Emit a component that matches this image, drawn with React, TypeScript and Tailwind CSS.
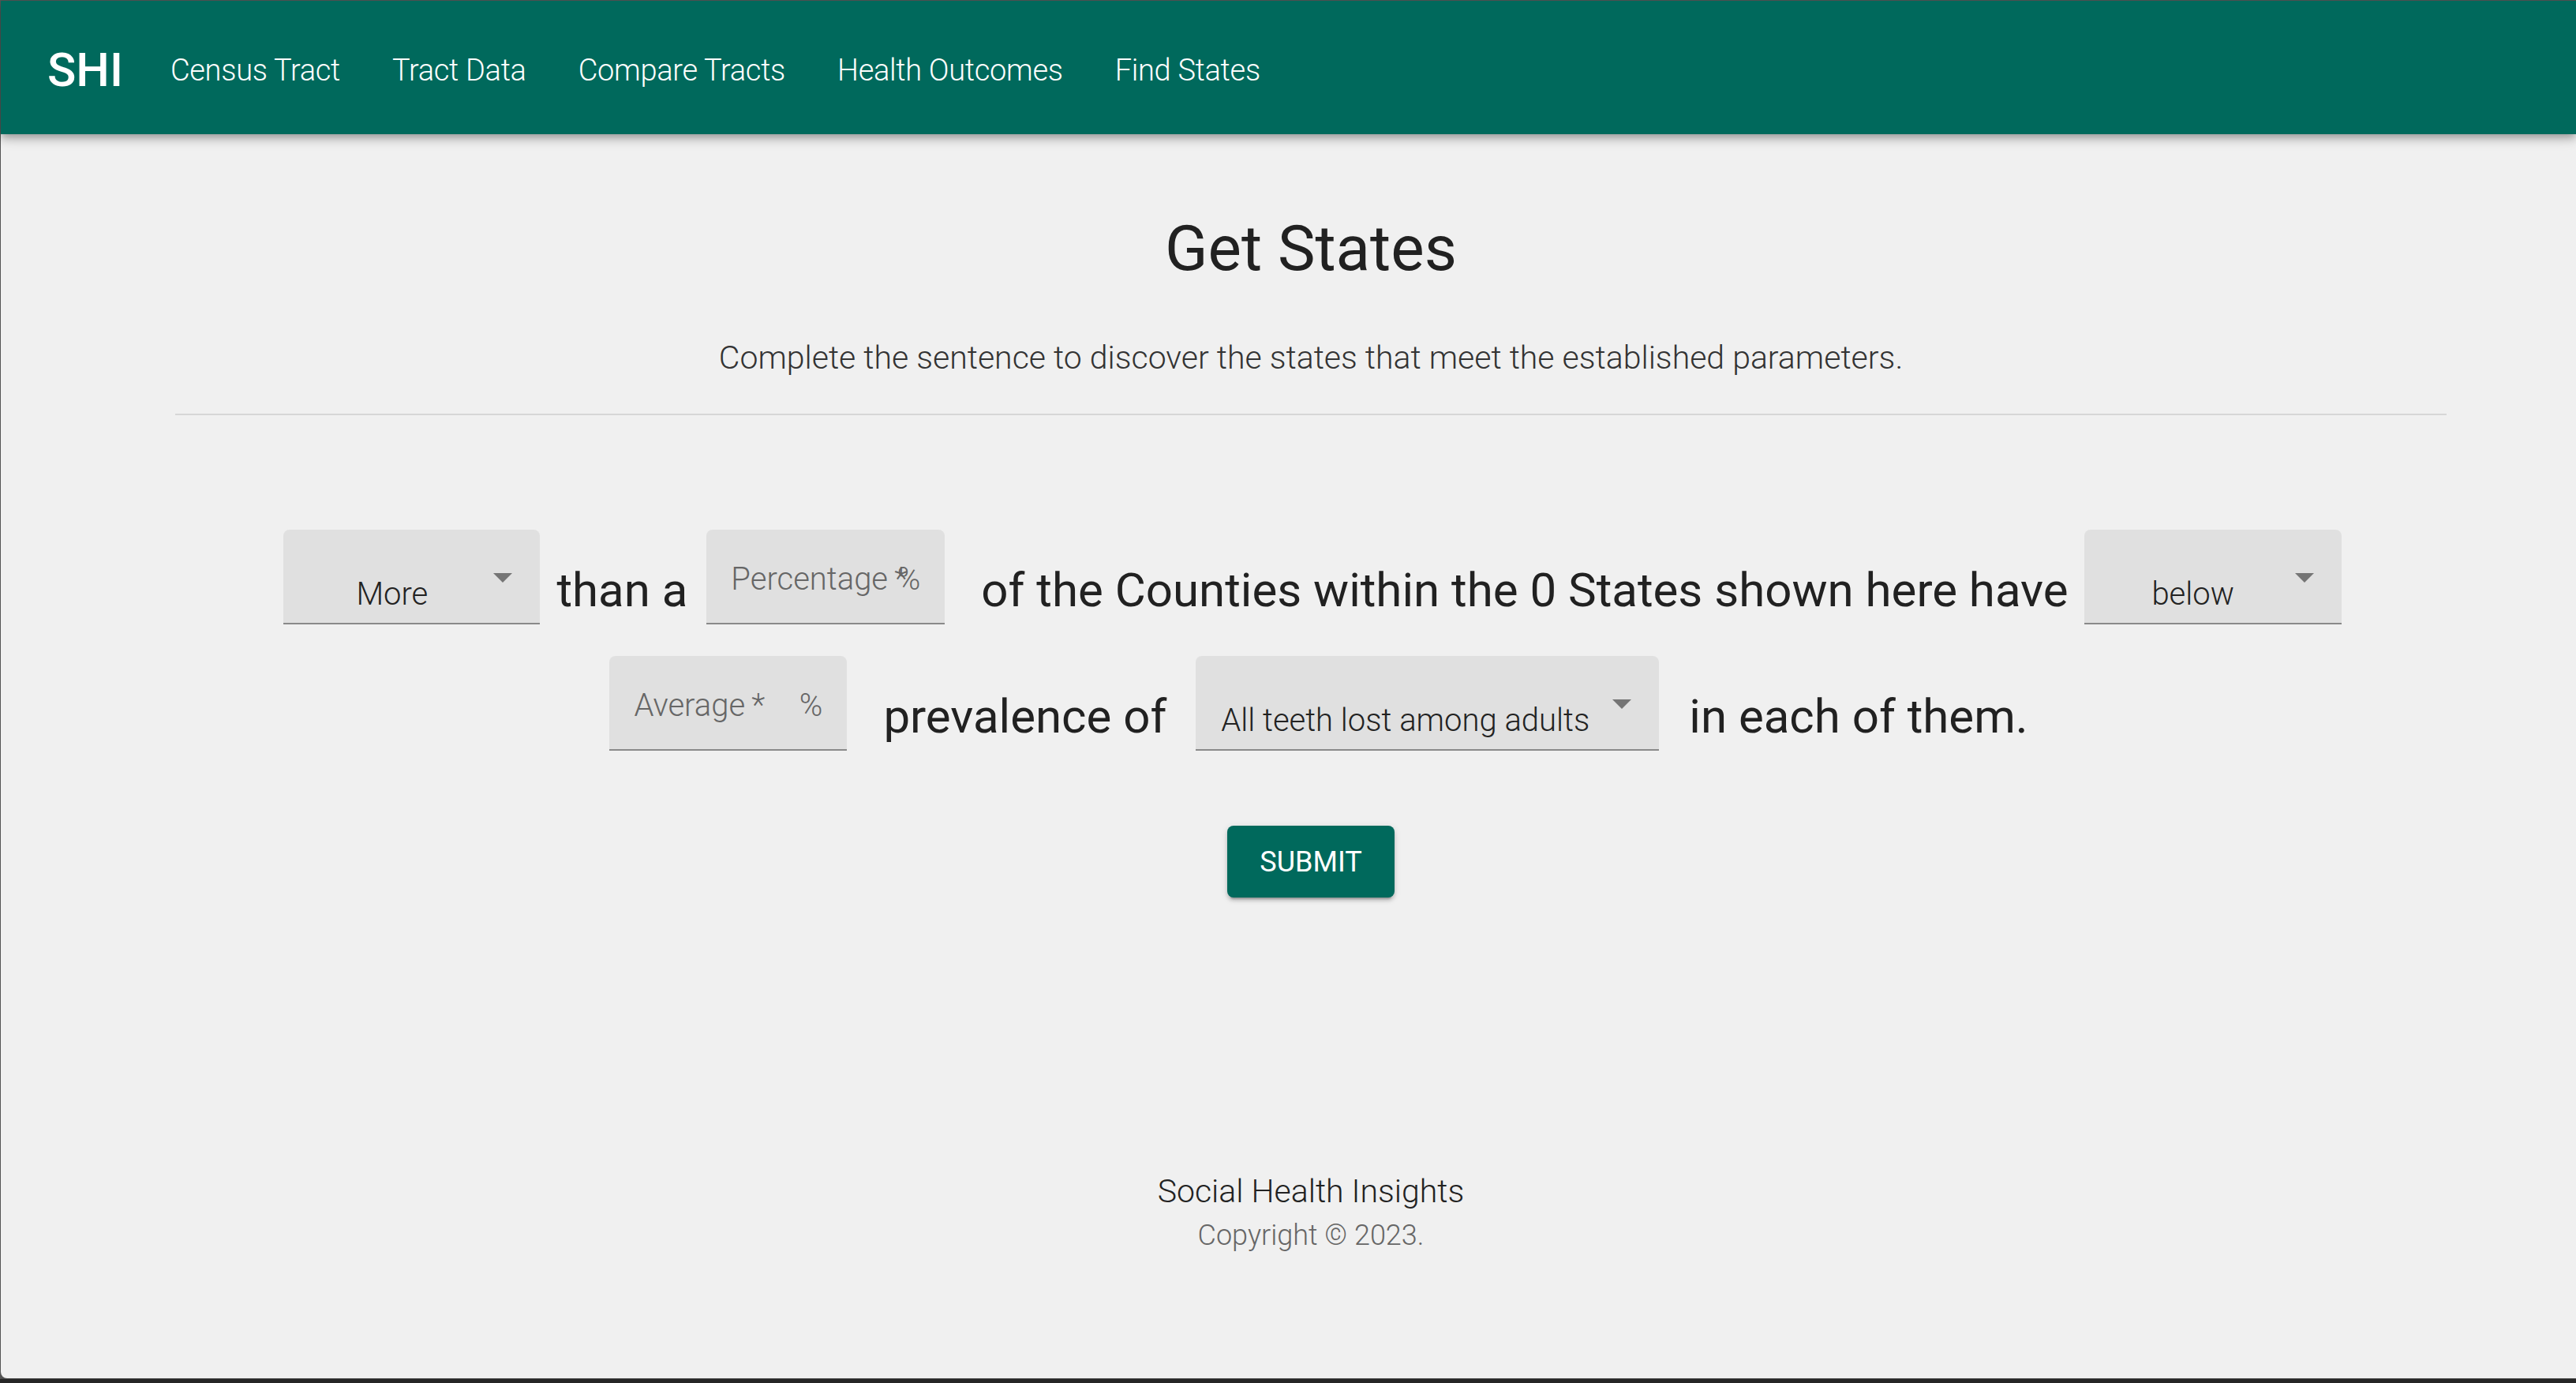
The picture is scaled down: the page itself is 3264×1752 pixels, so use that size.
import React from "react";

const navLinks = ["Census Tract", "Tract Data", "Compare Tracts", "Health Outcomes", "Find States"];

function Arrow() {
  return (
    <svg width="24" height="12" viewBox="0 0 24 12" className="absolute right-[35px] top-[55px]">
      <path d="M0 0H24L12 12Z" fill="#757575" />
    </svg>
  );
}

function CenterSelect({ value, className }: { value: string; className: string }) {
  return (
    <div className={className}>
      <div className="pt-[62px] pl-[24px] pr-[74px] text-center text-[40px] leading-[40px] font-light text-[#222]">
        {value}
      </div>
      <Arrow />
    </div>
  );
}

function PercentField({ label, className }: { label: string; className: string }) {
  return (
    <div className={className}>
      <span className="absolute left-[31px] top-[43px] text-[40px] leading-[40px] font-light text-[#666] whitespace-nowrap">
        {label}
        {"\u2009*"}
      </span>
      <span className="absolute right-[31px] top-[43px] text-[40px] leading-[40px] font-light text-[#666]">%</span>
    </div>
  );
}

function Words({ children, className }: { children: React.ReactNode; className: string }) {
  return <span className={className}>{children}</span>;
}

export default function App() {
  return (
    <div className="h-[1752px] w-full bg-[#262626] font-[Roboto,sans-serif] overflow-hidden">
      <div className="bg-[#555] pt-px pl-px">
        <div className="flex h-[1745px] flex-col rounded-bl-[8px] bg-[#f0f0f0]">
          {/* App bar */}
          <header className="relative z-10 flex h-[169px] shrink-0 items-center bg-[#00695c] pl-[59px] pt-[6px] shadow-[0_4px_8px_-2px_rgba(0,0,0,0.2),0_8px_10px_0_rgba(0,0,0,0.14),0_2px_20px_0_rgba(0,0,0,0.12)]">
            <span className="text-[60px] leading-[60px] font-medium text-white">SHI</span>
            <nav className="ml-[60px] flex gap-[66px]">
              {navLinks.map((l) => (
                <span key={l} className="text-[38px] leading-[38px] tracking-[-0.3px] font-light text-white whitespace-nowrap">
                  {l}
                </span>
              ))}
            </nav>
          </header>

          <main className="flex flex-1 flex-col items-center pl-[57px]">
            <h1 className="mt-[105px] text-[80px] leading-[80px] font-normal text-[#212121]">Get States</h1>
            <p className="mt-[78px] text-[41px] leading-[41px] font-light text-[#333]">
              Complete the sentence to discover the states that meet the established parameters.
            </p>
            <div className="mt-[50px] h-[2px] w-[2878px] bg-[#d6d6d6]" />

            {/* sentence form */}
            <div className="mt-[145px] flex items-start justify-center pl-[4px]">
              <CenterSelect
                value="More"
                className="relative h-[120px] w-[325px] shrink-0 rounded-t-[8px] border-b-2 border-[#8a8a8a] bg-[#e0e0e0]"
              />
              <Words className="ml-[21px] mr-[24px] mt-[47px] text-[60px] leading-[60px] text-[#212121] whitespace-nowrap">
                than a
              </Words>
              <PercentField
                label="Percentage"
                className="relative h-[120px] w-[302px] shrink-0 rounded-t-[8px] border-b-2 border-[#8a8a8a] bg-[#e0e0e0]"
              />
              <Words className="ml-[46px] mr-[20px] mt-[47px] text-[60px] leading-[60px] text-[#212121] whitespace-nowrap">
                of the Counties within the 0 States shown here have
              </Words>
              <CenterSelect
                value="below"
                className="relative h-[120px] w-[326px] shrink-0 rounded-t-[8px] border-b-2 border-[#8a8a8a] bg-[#e0e0e0]"
              />
            </div>

            <div className="mt-[40px] flex items-start justify-center pl-[20px]">
              <PercentField
                label="Average"
                className="relative h-[120px] w-[301px] shrink-0 rounded-t-[8px] border-b-2 border-[#8a8a8a] bg-[#e0e0e0]"
              />
              <Words className="ml-[46px] mr-[37px] mt-[47px] text-[60px] leading-[60px] text-[#212121] whitespace-nowrap">
                prevalence of
              </Words>
              <div className="relative h-[120px] w-[587px] shrink-0 rounded-t-[8px] border-b-2 border-[#8a8a8a] bg-[#e0e0e0]">
                <div className="pt-[62px] pl-[32px] text-[40px] leading-[40px] font-light text-[#222] whitespace-nowrap">
                  All teeth lost among adults
                </div>
                <Arrow />
              </div>
              <Words className="ml-[38px] mt-[47px] text-[60px] leading-[60px] text-[#212121] whitespace-nowrap">
                in each of them.
              </Words>
            </div>

            <button className="mt-[95px] flex h-[91px] w-[212px] items-center justify-center rounded-[8px] bg-[#00695c] text-[36px] leading-[36px] text-white shadow-[0_6px_2px_-4px_rgba(0,0,0,0.2),0_4px_4px_0_rgba(0,0,0,0.14),0_2px_10px_0_rgba(0,0,0,0.12)]">
              SUBMIT
            </button>

            <footer className="mt-[352px] flex flex-col items-center">
              <span className="text-[41px] leading-[41px] font-light text-[#222]">Social Health Insights</span>
              <span className="mt-[17px] text-[36px] leading-[36px] font-light text-[#666]">Copyright © 2023.</span>
            </footer>
          </main>
        </div>
        <div className="h-px bg-[#4a4a4a]" />
      </div>
    </div>
  );
}
